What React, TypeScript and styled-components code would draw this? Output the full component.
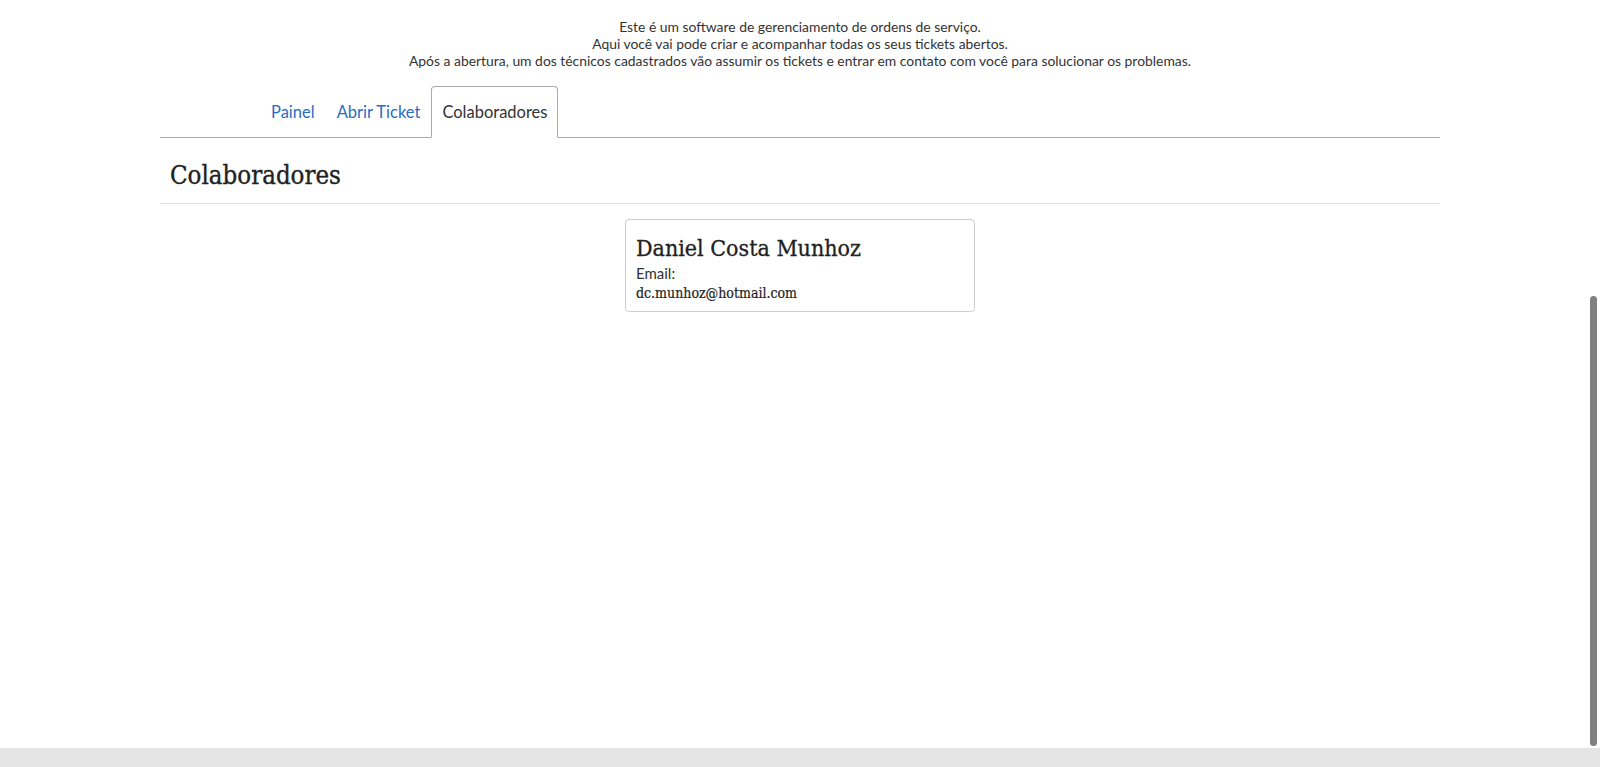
import React from "react";
import styled, { createGlobalStyle } from "styled-components";

const Global = createGlobalStyle`
  html, body { margin: 0; padding: 0; background: #fff; }
  body { font-family: Lato, "Open Sans", sans-serif; color: #333; overflow: hidden; }
`;

const Page = styled.div`
  display: flex;
  flex-direction: column;
  align-items: center;
  min-height: 767px;
`;

const Intro = styled.p`
  margin: 18px 0 0;
  font-size: 13.9px;
  line-height: 17px;
  text-align: center;
  color: #333;
`;

const Container = styled.div`
  width: 1280px;
  margin-top: 17px;
`;

const TabBar = styled.nav`
  display: flex;
  align-items: flex-end;
  padding-left: 100px;
  border-bottom: 1px solid #ababab;
`;

const Tab = styled.a<{ $active?: boolean }>`
  display: block;
  font-size: 16.5px;
  line-height: 20px;
  padding: 15px 10px;
  margin-bottom: -1px;
  text-decoration: none;
  color: ${(p) => (p.$active ? "#333" : "#2a6cc4")};
  background: ${(p) => (p.$active ? "#fff" : "transparent")};
  border: 1px solid ${(p) => (p.$active ? "#ababab" : "transparent")};
  border-bottom-color: ${(p) => (p.$active ? "#fff" : "transparent")};
  border-radius: 4px 4px 0 0;
  cursor: pointer;
`;

const SectionHeader = styled.div`
  border-bottom: 1px solid #e2e2e2;
  padding: 21px 10px 12px;
`;

const Title = styled.h2`
  margin: 0;
  font-family: "DejaVu Serif", serif;
  font-stretch: condensed;
  font-weight: normal;
  font-size: 25.6px;
  line-height: 32px;
  color: #222;
  -webkit-text-stroke: 0.35px #222;
`;

const Cards = styled.div`
  display: flex;
  justify-content: center;
  padding-top: 15px;
`;

const Card = styled.div`
  width: 328px;
  border: 1px solid #cfcfcf;
  border-radius: 4px;
  padding: 12px 10px 8px;
`;

const Name = styled.h3`
  margin: 0;
  font-family: "DejaVu Serif", serif;
  font-stretch: condensed;
  font-weight: normal;
  font-size: 23px;
  line-height: 32px;
  color: #222;
  -webkit-text-stroke: 0.3px #222;
`;

const Label = styled.div`
  font-size: 15px;
  line-height: 19px;
  color: #333;
`;

const EmailValue = styled.div`
  font-family: "DejaVu Serif", serif;
  font-stretch: condensed;
  font-size: 14px;
  line-height: 20px;
  color: #222;
  -webkit-text-stroke: 0.2px #222;
`;

const HScrollTrack = styled.div`
  position: fixed;
  left: 0;
  right: 0;
  bottom: 0;
  height: 19px;
  background: #e4e4e4;
`;

const VScrollThumb = styled.div`
  position: fixed;
  right: 3px;
  top: 296px;
  width: 7px;
  height: 450px;
  border-radius: 4px;
  background: #808080;
`;

export default function App() {
  return (
    <>
      <Global />
      <Page>
        <Intro>
          Este é um software de gerenciamento de ordens de serviço.
          <br />
          Aqui você vai pode criar e acompanhar todas os seus tickets abertos.
          <br />
          Após a abertura, um dos técnicos cadastrados vão assumir os tickets e entrar em contato com você para solucionar os problemas.
        </Intro>
        <Container>
          <TabBar>
            <Tab>Painel</Tab>
            <Tab>Abrir Ticket</Tab>
            <Tab $active>Colaboradores</Tab>
          </TabBar>
          <SectionHeader>
            <Title>Colaboradores</Title>
          </SectionHeader>
          <Cards>
            <Card>
              <Name>Daniel Costa Munhoz</Name>
              <Label>Email:</Label>
              <EmailValue>dc.munhoz@hotmail.com</EmailValue>
            </Card>
          </Cards>
        </Container>
      </Page>
      <VScrollThumb />
      <HScrollTrack />
    </>
  );
}
